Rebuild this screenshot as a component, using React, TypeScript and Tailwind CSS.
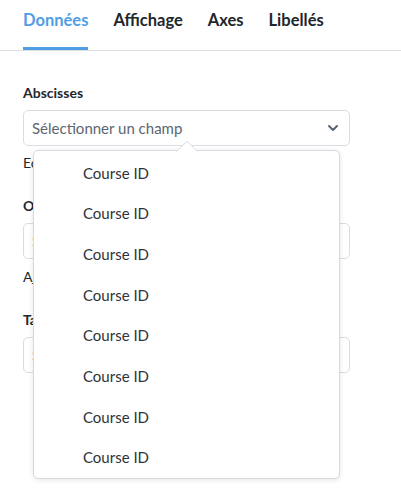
import { ChevronDown } from 'lucide-react';

const tabs = ['Données', 'Affichage', 'Axes', 'Libellés'];

const FieldSelect = () => (
  <div className="flex h-[36px] w-[327px] items-center justify-between rounded-[5px] border border-[#d9dde2] bg-white pl-[8px] pr-[8px]">
    <span className="text-[15px] leading-[18px] text-[#5c6670]">Sélectionner un champ</span>
    <ChevronDown className="h-[16px] w-[16px] text-[#5c6670]" strokeWidth={3} />
  </div>
);

export default function App() {
  return (
    <div className="relative h-[500px] w-[401px] overflow-hidden bg-white font-['Lato',sans-serif] text-[#22272c]">
      <div className="flex h-[51px] gap-[25px] border-b border-[#dcdfe3] px-[23px]">
        {tabs.map((t, i) => (
          <div
            key={t}
            className={
              i === 0
                ? 'h-[50px] border-b-[3px] border-[#509ee3] pt-[10px] text-[16.5px] font-bold leading-[20px] text-[#509ee3]'
                : 'h-[50px] pt-[10px] text-[16.5px] font-bold leading-[20px] text-[#22272c]'
            }
          >
            {t}
          </div>
        ))}
      </div>

      <div className="flex flex-col px-[23px] pt-[33px]">
        <div className="text-[14px] font-bold leading-[17px]">Abscisses</div>
        <div className="mt-[9px]">
          <FieldSelect />
        </div>
        <div className="mt-[8px] text-[14px] leading-[17px]">Echantillonnage</div>

        <div className="mt-[26px] text-[14px] font-bold leading-[17px]">Ordonnées</div>
        <div className="mt-[9px]">
          <FieldSelect />
        </div>
        <div className="mt-[9px] text-[14px] leading-[17px]">Ajouter une série</div>

        <div className="mt-[26px] text-[14px] font-bold leading-[17px]">Taille</div>
        <div className="mt-[9px]">
          <FieldSelect />
        </div>
      </div>

      <div className="absolute left-[33px] top-[150px] w-[307px] rounded-[5px] border border-[#d6dadf] bg-white pt-[1px] shadow-[0_1px_5px_rgba(0,0,0,0.1)]">
        <svg className="absolute left-[142px] top-[-10px]" width="22" height="11" viewBox="0 0 22 11">
          <polygon points="0,10.5 11,0.5 22,10.5" fill="#ffffff" />
          <polyline points="0,10.5 11,0.5 22,10.5" fill="none" stroke="#d6dadf" strokeWidth="1" />
        </svg>
        {Array.from({ length: 8 }).map((_, i) => (
          <div key={i} className="flex h-[40.7px] items-center pl-[49px] pt-[1px] text-[15px] text-[#2e3338]">
            Course ID
          </div>
        ))}
      </div>
    </div>
  );
}
